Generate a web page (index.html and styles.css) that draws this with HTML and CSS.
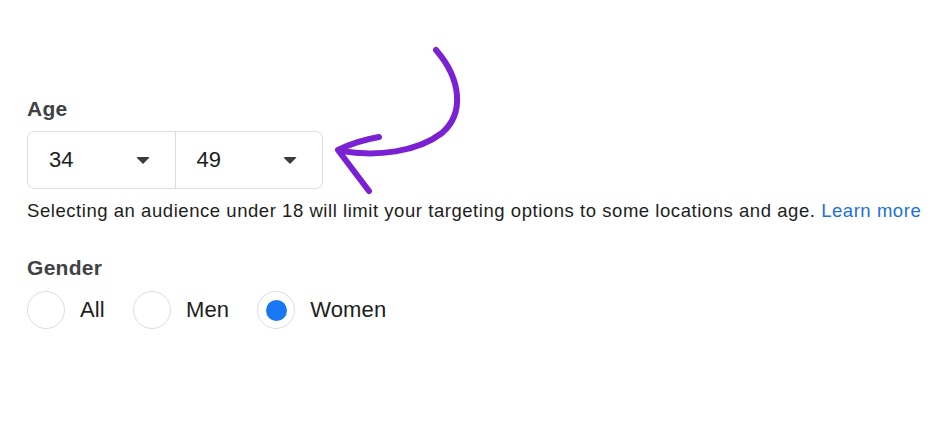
FILE: index.html
```html
<!DOCTYPE html>
<html lang="en">

<head>
  <title>Audience</title>
  <meta charset="UTF-8" />
  <meta name="viewport" content="width=device-width,initial-scale=1" />
  <link rel="stylesheet" href="styles.css">
</head>

<body>
  <div class="audience">
    <div class="field age">
      <div class="field-label">Age</div>
      <div class="age-range">
        <div class="age-select"><span>34</span><span class="caret"></span></div>
        <div class="age-select"><span>49</span><span class="caret"></span></div>
      </div>
      <div class="hint">
        Selecting an audience under 18 will limit your targeting options to some locations and age.
        <a class="link" href="#">Learn more</a>
      </div>
    </div>

    <div class="field gender">
      <div class="field-label">Gender</div>
      <div class="radio-group">
        <label class="radio"><span class="radio-circle"></span>All</label>
        <label class="radio"><span class="radio-circle"></span>Men</label>
        <label class="radio checked"><span class="radio-circle"></span>Women</label>
      </div>
    </div>
  </div>

  <!-- hand drawn annotation -->
  <svg class="annotation" width="935" height="421" viewBox="0 0 935 421">
    <path d="M436 50 C462 80, 464 114, 442 133 C417 152, 377 157, 341 151" />
    <path d="M379 137 Q356 141 338 150 Q353 170 369 191" />
  </svg>
</body>

</html>
```

FILE: styles.css
```css
body,
html {
  margin: 0;
  padding: 0;
  border: 0;
  background: #fff;
}

body {
  font-family: "Liberation Sans", Arial, sans-serif;
  color: #1c1e21;
  position: relative;
}

.audience {
  padding: 97px 0 0 27px;
}

.field-label {
  font-size: 21px;
  line-height: 24px;
  font-weight: bold;
  letter-spacing: 0.3px;
  color: #404246;
}

.age-range {
  display: flex;
  width: 296px;
  height: 58px;
  box-sizing: border-box;
  margin-top: 10px;
  border: 1.5px solid #dcdde0;
  border-radius: 7px;
}

.age-select {
  flex: 1;
  display: flex;
  align-items: center;
  justify-content: space-between;
  padding: 0 25px 0 21px;
  font-size: 22px;
}

.age-select + .age-select {
  border-left: 1.5px solid #dcdde0;
}

.caret {
  width: 0;
  height: 0;
  border-left: 7.5px solid transparent;
  border-right: 7.5px solid transparent;
  border-top: 7px solid #3a3b3e;
  border-radius: 2px;
}

.hint {
  margin-top: 11px;
  font-size: 18.5px;
  line-height: 22px;
  letter-spacing: 0.55px;
  color: #1c1e21;
}

.link {
  color: #216fdb;
  text-decoration: none;
}

.gender {
  margin-top: 34px;
}

.radio-group {
  display: flex;
  gap: 28px;
  margin-top: 11px;
}

.radio {
  display: flex;
  align-items: center;
  gap: 15px;
  font-size: 22px;
  letter-spacing: 0.15px;
}

.radio-circle {
  width: 38px;
  height: 38px;
  box-sizing: border-box;
  border: 1.5px solid #dcdde0;
  border-radius: 50%;
  display: flex;
  align-items: center;
  justify-content: center;
}

.radio.checked .radio-circle::after {
  content: "";
  width: 21px;
  height: 21px;
  border-radius: 50%;
  background: #1877f2;
}

.annotation {
  position: absolute;
  top: 0;
  left: 0;
  pointer-events: none;
}

.annotation path {
  fill: none;
  stroke: #7a21d3;
  stroke-width: 6;
  stroke-linecap: round;
  stroke-linejoin: round;
}
```
